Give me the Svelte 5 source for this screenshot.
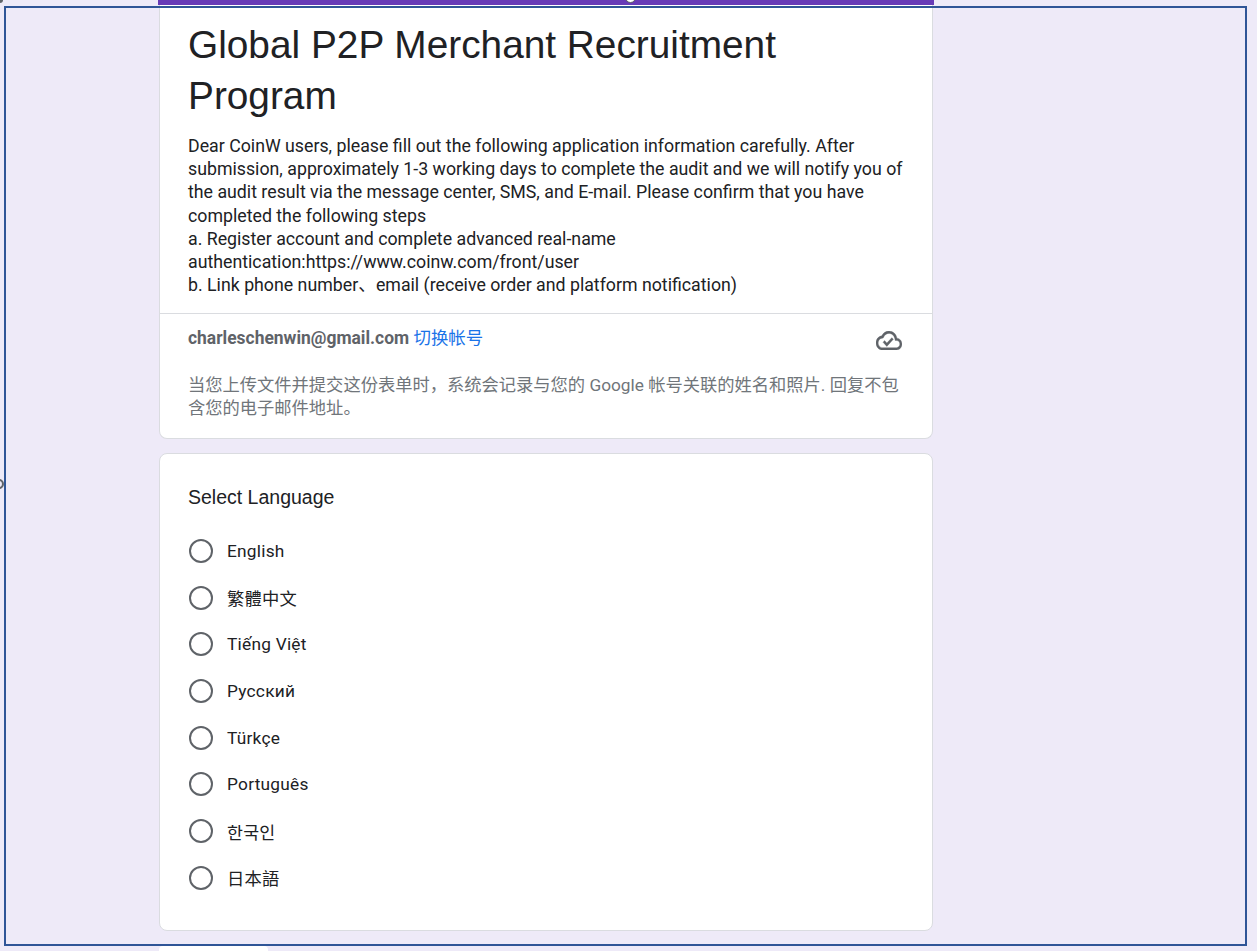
<script>
	const languages = ['English', '繁體中文', 'Tiếng Việt', 'Русский', 'Türkçe', 'Português', '한국인', '日本語'];
</script>

<div class="page">
	<div class="column">
		<div class="accent"></div>
		<section class="card intro">
			<div class="head">
				<h1>Global P2P Merchant Recruitment Program</h1>
				<p class="desc">Dear CoinW users, please fill out the following application information carefully. After submission, approximately 1-3 working days to complete the audit and we will notify you of the audit result via the message center, SMS, and E-mail. Please confirm that you have completed the following steps<br />a. Register account and complete advanced real-name authentication:https://www.coinw.com/front/user<br />b. Link phone number、email (receive order and platform notification)</p>
			</div>
			<div class="account">
				<div class="account-row">
					<div><b>charleschenwin@gmail.com</b> <span class="switch">切换帐号</span></div>
					<svg class="cloud" width="26" height="19" viewBox="0 4 24 16" preserveAspectRatio="none" fill="#5f6368" stroke="#5f6368" stroke-width="0.3" aria-hidden="true">
						<path d="M19.35 10.04C18.67 6.59 15.64 4 12 4 9.11 4 6.6 5.64 5.35 8.04 2.34 8.36 0 10.91 0 14c0 3.31 2.69 6 6 6h13c2.76 0 5-2.24 5-5 0-2.64-2.05-4.78-4.65-4.96zM19 18H6c-2.21 0-4-1.79-4-4 0-2.05 1.53-3.76 3.56-3.97l1.07-.11.5-.95C8.08 7.14 9.94 6 12 6c2.62 0 4.88 1.86 5.39 4.43l.3 1.5 1.53.11c1.56.1 2.78 1.41 2.78 2.96 0 1.65-1.35 3-3 3z" />
						<path d="M10 14.2l-2.1-2.1-1.4 1.4 3.5 3.5 6-6-1.4-1.4z" />
					</svg>
				</div>
				<p class="notice">当您上传文件并提交这份表单时，系统会记录与您的 Google 帐号关联的姓名和照片. 回复不包含您的电子邮件地址。</p>
			</div>
		</section>

		<section class="card question">
			<h2>Select Language</h2>
			<div class="options">
				{#each languages as lang}
					<div class="option">
						<span class="radio"></span>
						<span class="label">{lang}</span>
					</div>
				{/each}
			</div>
		</section>

		<div class="next-button"></div>
	</div>

	<div class="frame"></div>
	<span class="corner"></span>
	<span class="side-ring"></span>
	<span class="top-dot"></span>
</div>

<style>
	:global(body) {
		margin: 0;
		background: #eeeaf8;
	}
	.page {
		position: relative;
		height: 951px;
		overflow: hidden;
		font-family: Roboto, "Noto Sans CJK SC", sans-serif;
		color: #202124;
	}
	.column {
		width: 776px;
		margin-left: 158px;
	}
	.accent {
		height: 5px;
		background: #673ab7;
	}
	.card {
		margin: 0 1px;
		background: #fff;
		border: 1px solid #dadce0;
		box-sizing: border-box;
		border-radius: 0 0 8px 8px;
	}
	.intro {
		border-top: 0;
		height: 434px;
	}
	.head {
		height: 309px;
		padding: 14px 29px 0;
		box-sizing: border-box;
		border-bottom: 1px solid #dadce0;
		margin-left: -1px;
		margin-right: -1px;
	}
	h1 {
		margin: 0;
		font: 400 38.8px/51px "Liberation Sans", Arial, sans-serif;
		color: #202124;
	}
	.desc {
		margin: 14px 0 0;
		font-size: 17.75px;
		line-height: 23.2px;
		color: #202124;
	}
	.account {
		padding: 12px 28px 0;
		font-size: 17.45px;
		color: #5f6368;
	}
	.account-row {
		display: flex;
		justify-content: space-between;
		line-height: 24px;
		height: 32px;
	}
	.account-row b {
		font-weight: 700;
	}
	.switch {
		color: #1a73e8;
	}
	.cloud {
		margin: 5px 2px 0 0;
	}
	.notice {
		margin: 16px 0 0;
		font-size: 17.27px;
		line-height: 23.3px;
		color: #70757a;
	}
	.question {
		margin-top: 14px;
		height: 478px;
		border-radius: 8px;
		padding: 30px 29px 0;
	}
	h2 {
		margin: 0 0 0 -1px;
		font: 400 19.5px/26px "Liberation Sans", Arial, sans-serif;
		color: #202124;
	}
	.options {
		margin-top: 29px;
		display: flex;
		flex-direction: column;
		gap: 22.7px;
	}
	.option {
		display: flex;
		align-items: center;
		height: 24px;
		gap: 14px;
	}
	.radio {
		width: 24px;
		height: 24px;
		box-sizing: border-box;
		border: 2px solid #5f6368;
		border-radius: 50%;
	}
	.label {
		font-size: 17.3px;
		letter-spacing: 0.24px;
		color: #202124;
	}
	.next-button {
		margin: 15px 1px 0;
		width: 109px;
		height: 40px;
		background: #fff;
		border-radius: 4px;
	}
	.frame {
		position: absolute;
		left: 4px;
		top: 6px;
		width: 1243px;
		height: 940px;
		box-sizing: border-box;
		border: 2px solid #2f5597;
		pointer-events: none;
	}
	.corner {
		position: absolute;
		left: -3px;
		top: -3px;
		width: 6px;
		height: 6px;
		border-radius: 50%;
		background: #5f6368;
	}
	.side-ring {
		position: absolute;
		left: -6px;
		top: 479px;
		width: 6px;
		height: 6px;
		border: 2px solid #5f6368;
		border-radius: 50%;
	}
	.top-dot {
		position: absolute;
		left: 625px;
		top: -8px;
		width: 9px;
		height: 9px;
		border: 1px solid #5f6368;
		background: #fff;
		border-radius: 50%;
	}
</style>
